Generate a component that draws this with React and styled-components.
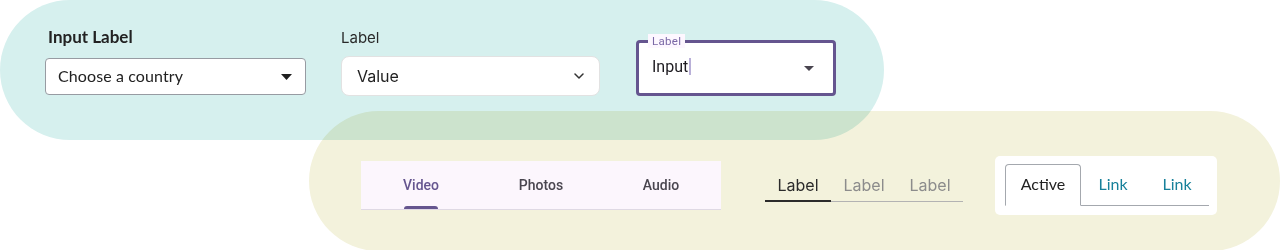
import React from 'react';
import styled, { createGlobalStyle } from 'styled-components';

const GlobalStyle = createGlobalStyle`
  * { box-sizing: border-box; }
  html, body { margin: 0; padding: 0; background: #ffffff; }
  body { overflow: hidden; }
`;

const Page = styled.div`
  width: 1280px;
  height: 250px;
  overflow: hidden;
  background: #ffffff;
`;

// teal pill holding the form fields
const FieldPill = styled.div`
  width: 884px;
  height: 140px;
  border-radius: 70px;
  background: #d6f0ee;
  display: flex;
  align-items: flex-end;
  padding: 0 0 44px 45px;
`;

// yellow pill holding the tab bars
const TabPill = styled.div`
  width: 971px;
  height: 140px;
  margin: -29px 0 0 309px;
  border-radius: 70px;
  background: #f3f2dc;
  mix-blend-mode: multiply;
  display: flex;
  align-items: center;
  padding: 8px 0 0 52px;
`;

const Field = styled.div`
  display: flex;
  flex-direction: column;
  width: ${(p) => p.$width}px;
  margin-right: ${(p) => p.$gap || 0}px;
  margin-bottom: ${(p) => p.$lift || 0}px;
`;

const BoldLabel = styled.label`
  font-family: 'Lato', 'Open Sans', sans-serif;
  font-weight: 700;
  font-size: 17px;
  line-height: 20px;
  color: #222;
  margin: 0 0 11px 3px;
`;

const PlainLabel = styled.label`
  font-family: 'Inter', sans-serif;
  font-size: 15px;
  line-height: 20px;
  color: #2a2a2a;
  margin-bottom: 8px;
`;

const SelectBox = styled.div`
  display: flex;
  align-items: center;
  justify-content: space-between;
  height: ${(p) => p.$height}px;
  background: #fff;
  border: 1px solid ${(p) => p.$border};
  border-radius: ${(p) => p.$radius}px;
  padding: ${(p) => p.$pad};
`;

const CountryText = styled.span`
  font-family: 'Lato', 'Open Sans', sans-serif;
  font-size: 16px;
  letter-spacing: 0.1px;
  color: #222;
  margin-top: -2px;
`;

const ValueText = styled.span`
  font-family: 'Inter', sans-serif;
  font-size: 16px;
  color: #222;
`;

const Outlined = styled.div`
  position: relative;
  width: 200px;
  height: 56px;
  border: 3px solid #65558f;
  border-radius: 4px;
  background: #fff;
  display: flex;
  align-items: center;
  justify-content: space-between;
  padding: 0 19px 0 13px;
`;

const FloatLabel = styled.span`
  position: absolute;
  top: -9px;
  left: 9px;
  padding: 0 4px;
  background: #fdf7ff;
  font-family: 'Roboto', sans-serif;
  font-size: 11.5px;
  line-height: 14px;
  letter-spacing: 0.3px;
  color: #7a68a6;
`;

const InputText = styled.span`
  font-family: 'Roboto', sans-serif;
  font-size: 16px;
  color: #1d1b20;
  display: flex;
  align-items: center;
  margin-top: -3px;
`;

const Cursor = styled.span`
  display: inline-block;
  width: 2px;
  height: 17px;
  margin-left: 1px;
  background: #b9b0d8;
`;

/* material tabs */
const MaterialBar = styled.div`
  display: flex;
  width: 360px;
  height: 49px;
  background: #fcf6fd;
  border-bottom: 1px solid #dfd9e4;
  margin-right: 44px;
`;

const MaterialTab = styled.div`
  position: relative;
  flex: 1;
  display: flex;
  align-items: center;
  justify-content: center;
  font-family: 'Roboto', sans-serif;
  font-weight: 500;
  font-size: 14px;
  color: ${(p) => (p.$active ? '#65558f' : '#49454f')};
  padding-top: 1px;
`;

const Indicator = styled.span`
  position: absolute;
  bottom: 0;
  left: 50%;
  width: 34px;
  margin-left: -17px;
  height: 3px;
  border-radius: 3px 3px 0 0;
  background: #65558f;
`;

/* underline tabs */
const LineBar = styled.div`
  display: flex;
  border-bottom: 1px solid #b3b3b3;
  margin: 0 32px 0 0;
`;

const LineTab = styled.div`
  width: 66px;
  text-align: center;
  font-family: 'Inter', sans-serif;
  font-size: 16px;
  line-height: 22px;
  padding: 5px 0 4px;
  color: ${(p) => (p.$active ? '#2b2b2b' : '#8c8c8c')};
  border-bottom: 2px solid ${(p) => (p.$active ? '#2b2b2b' : 'transparent')};
  margin-bottom: -1px;
`;

/* bootstrap-like nav tabs */
const NavCard = styled.div`
  width: 222px;
  height: 59px;
  background: #fff;
  border-radius: 5px;
  padding: 8px 8px 0 10px;
`;

const NavList = styled.div`
  display: flex;
  border-bottom: 1px solid #a4a8ae;
  height: 42px;
`;

const NavTab = styled.div`
  display: flex;
  align-items: center;
  justify-content: center;
  width: ${(p) => p.$width}px;
  height: 42px;
  font-family: 'Lato', 'Open Sans', sans-serif;
  font-size: 16px;
  color: ${(p) => (p.$active ? '#222' : '#17809a')};
  background: ${(p) => (p.$active ? '#fff' : 'transparent')};
  border: 1px solid ${(p) => (p.$active ? '#a4a8ae' : 'transparent')};
  border-bottom-color: ${(p) => (p.$active ? '#fff' : 'transparent')};
  border-radius: 4px 4px 0 0;
  padding-bottom: 2px;
`;

const CaretDown = () => (
  <svg width="11" height="6" viewBox="0 0 11 6">
    <path d="M0 0 L11 0 L5.5 6 Z" fill="#1f1f1f" />
  </svg>
);

const Chevron = () => (
  <svg width="10" height="6" viewBox="0 0 10 6">
    <path d="M1 1 L5 5 L9 1" fill="none" stroke="#333" strokeWidth="1.5" strokeLinecap="round" strokeLinejoin="round" />
  </svg>
);

const SmallCaret = () => (
  <svg width="10" height="5" viewBox="0 0 10 5">
    <path d="M0 0 L10 0 L5 5 Z" fill="#49454f" />
  </svg>
);

export default function App() {
  return (
    <Page>
      <GlobalStyle />
      <FieldPill>
        <Field $width={261} $gap={35} $lift={1}>
          <BoldLabel>Input Label</BoldLabel>
          <SelectBox $height={37} $border="#979ba2" $radius={4} $pad="0 13px 0 12px">
            <CountryText>Choose a country</CountryText>
            <CaretDown />
          </SelectBox>
        </Field>

        <Field $width={259} $gap={36}>
          <PlainLabel>Label</PlainLabel>
          <SelectBox $height={40} $border="#e2e2e2" $radius={8} $pad="0 15px 0 15px">
            <ValueText>Value</ValueText>
            <Chevron />
          </SelectBox>
        </Field>

        <Outlined>
          <FloatLabel>Label</FloatLabel>
          <InputText>
            Input<Cursor />
          </InputText>
          <SmallCaret />
        </Outlined>
      </FieldPill>

      <TabPill>
        <MaterialBar>
          <MaterialTab $active>
            Video
            <Indicator />
          </MaterialTab>
          <MaterialTab>Photos</MaterialTab>
          <MaterialTab>Audio</MaterialTab>
        </MaterialBar>

        <LineBar>
          <LineTab $active>Label</LineTab>
          <LineTab>Label</LineTab>
          <LineTab>Label</LineTab>
        </LineBar>

        <NavCard>
          <NavList>
            <NavTab $active $width={76}>Active</NavTab>
            <NavTab $width={64}>Link</NavTab>
            <NavTab $width={64}>Link</NavTab>
          </NavList>
        </NavCard>
      </TabPill>
    </Page>
  );
}
